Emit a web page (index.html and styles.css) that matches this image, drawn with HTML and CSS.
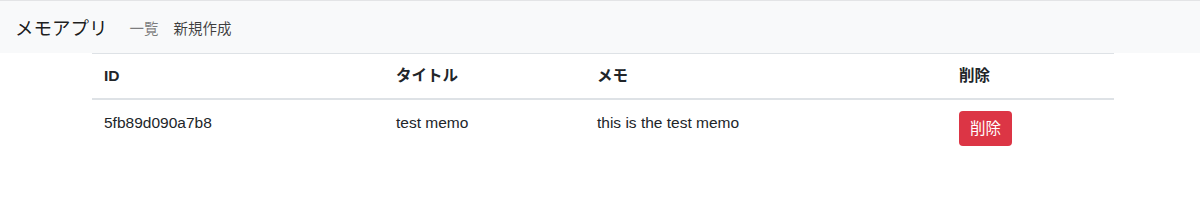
FILE: index.html
```html
<!DOCTYPE html>
<html lang="ja">
<head>
    <meta charset="UTF-8">
    <meta name="viewport" content="width=device-width, initial-scale=1.0">
    <title>メモアプリ</title>
    <link rel="stylesheet" href="styles.css">
</head>
<body>

<nav class="navbar">
    <span class="brand">メモアプリ</span>
    <a class="navLink" href="#">一覧</a>
    <a class="navLink active" href="#">新規作成</a>
</nav>

<div class="container">
    <table class="memoTable">
        <colgroup>
            <col class="colId">
            <col class="colTitle">
            <col class="colMemo">
            <col class="colDelete">
        </colgroup>
        <thead>
            <tr>
                <th>ID</th>
                <th>タイトル</th>
                <th>メモ</th>
                <th>削除</th>
            </tr>
        </thead>
        <tbody>
            <tr>
                <td>5fb89d090a7b8</td>
                <td>test memo</td>
                <td>this is the test memo</td>
                <td><span class="btnDelete">削除</span></td>
            </tr>
        </tbody>
    </table>
</div>

</body>
</html>
```

FILE: styles.css
```css
body {
    margin: 0;
    font-family: "Liberation Sans", Arial, "Noto Sans CJK JP", sans-serif;
    font-size: 15.5px;
    color: #212529;
    background-color: #fff;
}
.navbar {
    display: flex;
    align-items: center;
    height: 52px;
    border-top: 1px solid #e3e4e6;
    background-color: #f8f9fa;
    padding: 0 15px;
}
.brand {
    font-size: 18.5px;
    color: rgba(0, 0, 0, 0.9);
    margin-right: 22px;
}
.navLink {
    font-size: 14.5px;
    color: rgba(0, 0, 0, 0.5);
    text-decoration: none;
    margin-right: 15px;
}
.navLink.active {
    color: rgba(0, 0, 0, 0.75);
}
.container {
    width: 1022px;
    margin-left: 92px;
}
.memoTable {
    width: 100%;
    border-collapse: collapse;
    table-layout: fixed;
}
.colId {
    width: 292px;
}
.colTitle {
    width: 201px;
}
.colMemo {
    width: 362px;
}
.colDelete {
    width: 167px;
}
.memoTable th,
.memoTable td {
    text-align: left;
    vertical-align: top;
    padding: 11px 12px;
    line-height: 22px;
    border-top: 1px solid #dee2e6;
}
.memoTable th {
    font-weight: bold;
    border-bottom: 2px solid #dee2e6;
}
.memoTable td {
    border-top: none;
    padding-top: 12px;
    padding-bottom: 10px;
}
.btnDelete {
    display: inline-block;
    margin-top: -1px;
    padding: 6px 11px;
    line-height: 23px;
    color: #fff;
    background-color: #dc3545;
    border-radius: 4px;
}
```
